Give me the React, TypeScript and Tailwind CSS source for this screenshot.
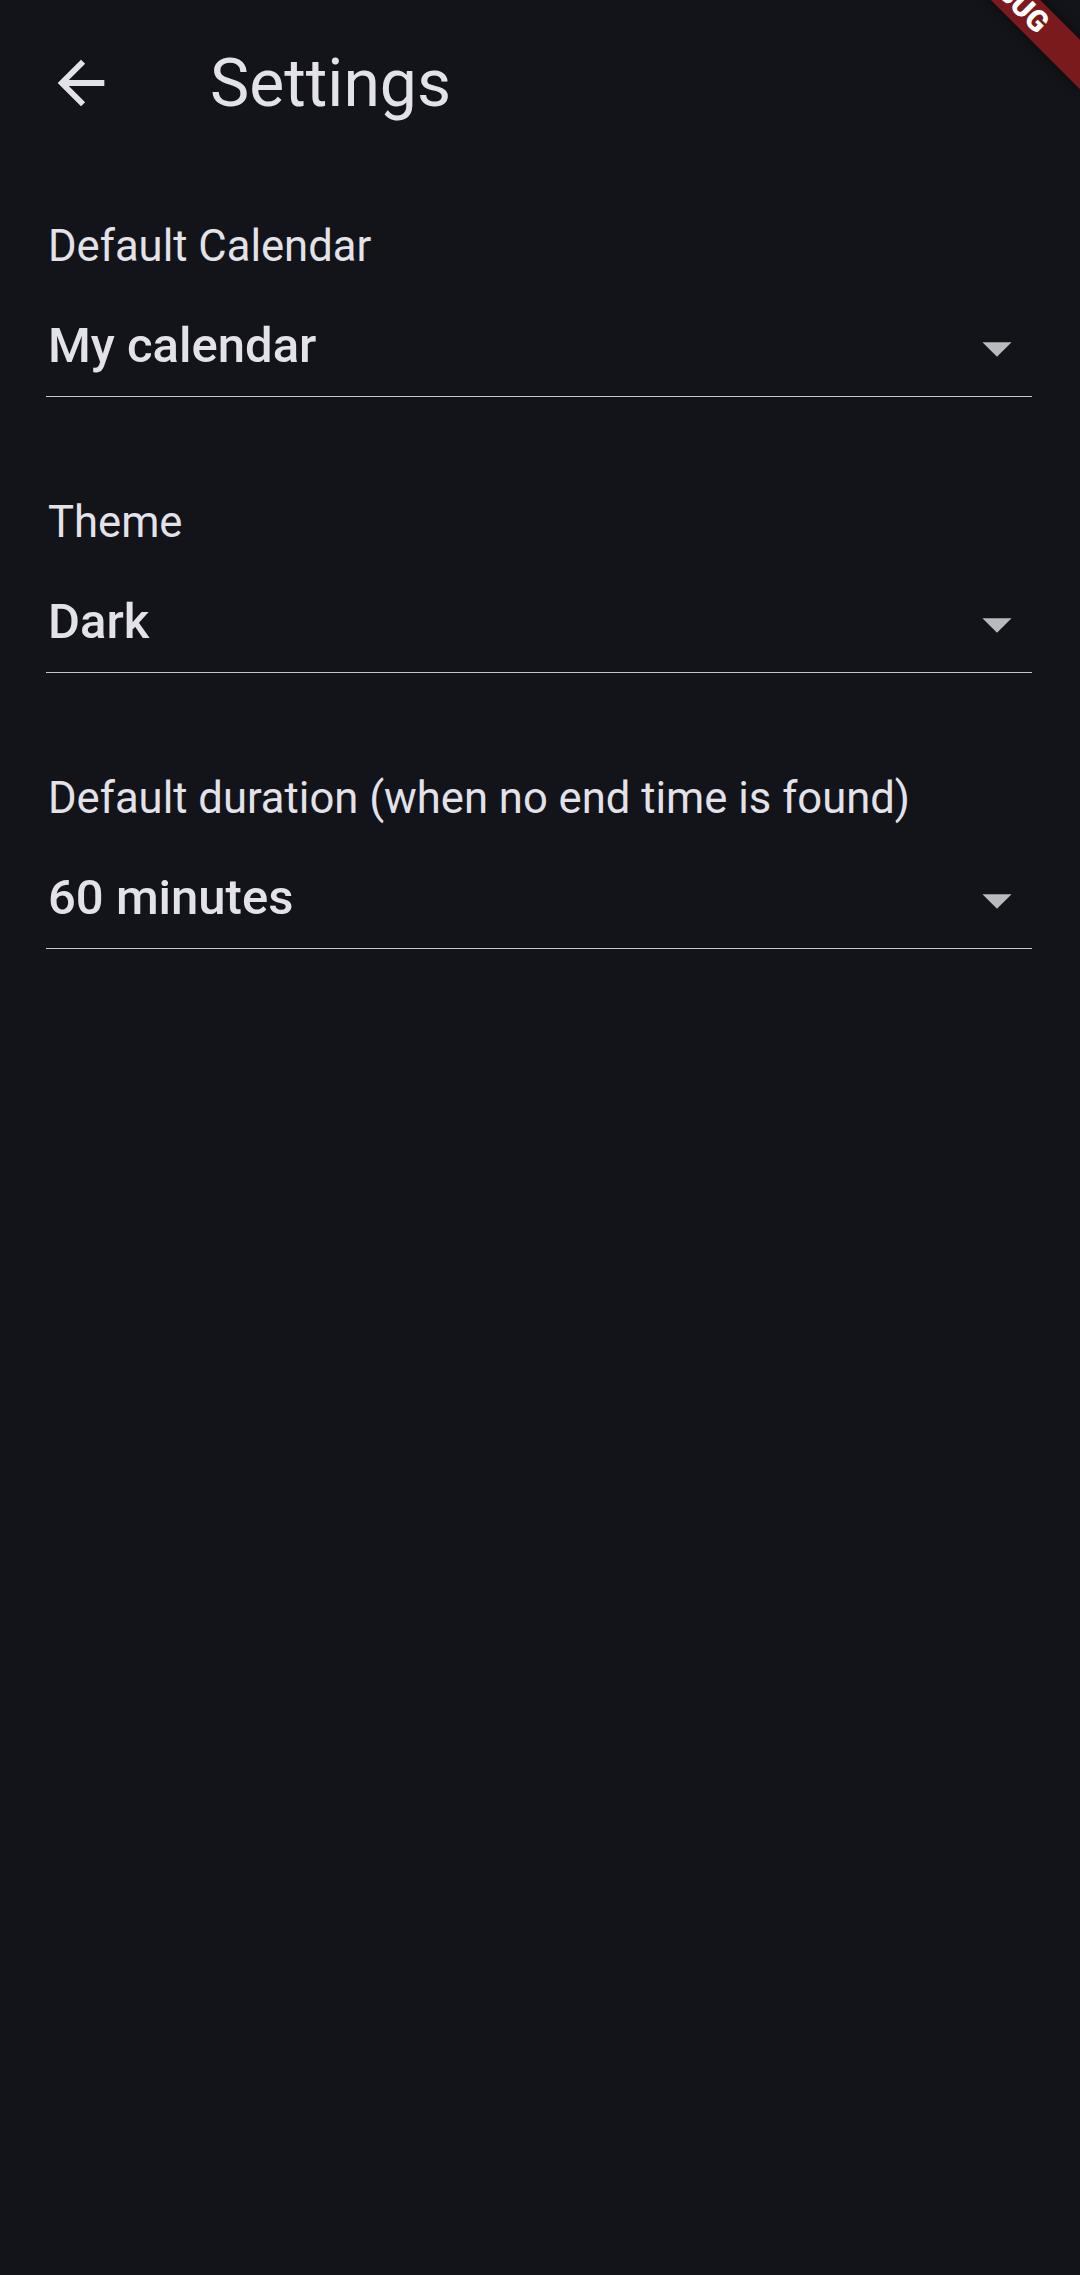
import React from "react";

const TEXT = "text-[#e3e2e9]";

function Field({ label, value }: { label: string; value: string }) {
  return (
    <div className="flex flex-col">
      <div className={`ml-[2px] text-[43.6px] leading-[52px] ${TEXT}`}>{label}</div>
      <div className="mt-[40px] flex h-[70px] items-center justify-between">
        <span className={`ml-[2px] mb-[6px] text-[49px] leading-[59px] font-medium ${TEXT}`}>{value}</span>
        <svg width="70" height="70" viewBox="0 0 24 24" className="shrink-0">
          <path d="M7 10l5 5 5-5z" fill="#b9babe" />
        </svg>
      </div>
      <div className="mt-[13px] h-px bg-[#c6c6cc]" />
    </div>
  );
}

export default function App() {
  return (
    <div className="relative w-full h-[2275px] overflow-hidden bg-[#131419] font-['Roboto',sans-serif]">
      <header className="flex h-[166px] items-center">
        <div className="flex w-[162px] justify-center">
          <svg width="70" height="70" viewBox="0 0 24 24">
            <path
              d="M20 11H7.83l5.59-5.59L12 4l-8 8 8 8 1.41-1.41L7.83 13H20v-2z"
              fill="#e3e2e9"
            />
          </svg>
        </div>
        <h1 className={`ml-[48px] text-[66px] leading-[77px] font-normal ${TEXT}`}>Settings</h1>
      </header>

      <main className="mt-[55px] flex flex-col gap-[100px] pl-[46px] pr-[48px]">
        <Field label="Default Calendar" value="My calendar" />
        <Field label="Theme" value="Dark" />
        <Field label="Default duration (when no end time is found)" value="60 minutes" />
      </main>

      <div className="absolute left-[894px] top-[-23px] flex h-[35px] w-[232px] rotate-45 items-center justify-center bg-[#7a1a1c] shadow-[0_0_10px_rgba(0,0,0,0.5)]">
        <span className="text-[29.6px] leading-[29.6px] font-black text-white">DEBUG</span>
      </div>
    </div>
  );
}
